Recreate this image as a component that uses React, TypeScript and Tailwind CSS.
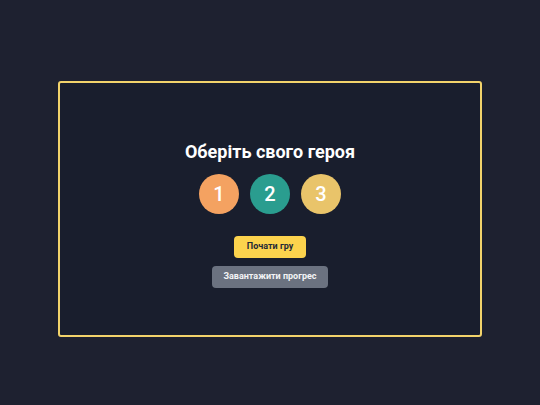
const heroes = [
  { id: 1, color: "bg-[#f4a261]" },
  { id: 2, color: "bg-[#2a9d8f]" },
  { id: 3, color: "bg-[#e9c46a]" },
];

export default function App() {
  return (
    <div className="h-[405px] w-[540px] bg-[#1e2130] pt-[81px] pl-[58px] font-['Roboto',sans-serif]">
      <div className="flex h-[256px] w-[424px] flex-col items-center rounded-[3px] border-2 border-[#f2d36b] bg-[#191e2d] pt-[55px]">
        <h1 className="text-lg leading-7 font-bold text-white">
          Оберіть свого героя
        </h1>

        <div className="mt-[8px] flex gap-[11px]">
          {heroes.map((h) => (
            <button
              key={h.id}
              className={`flex h-[40px] w-[40px] items-center justify-center rounded-full text-xl font-medium text-white ${h.color}`}
            >
              {h.id}
            </button>
          ))}
        </div>

        <button className="mt-[22px] h-[22px] w-[72px] rounded bg-[#fcd34d] text-[9px] font-bold text-[#1f2937]">
          Почати гру
        </button>

        <button className="mt-[8px] h-[22px] w-[116px] rounded bg-[#6b7280] text-[9px] font-bold text-[#f3f4f6]">
          Завантажити прогрес
        </button>
      </div>
    </div>
  );
}
